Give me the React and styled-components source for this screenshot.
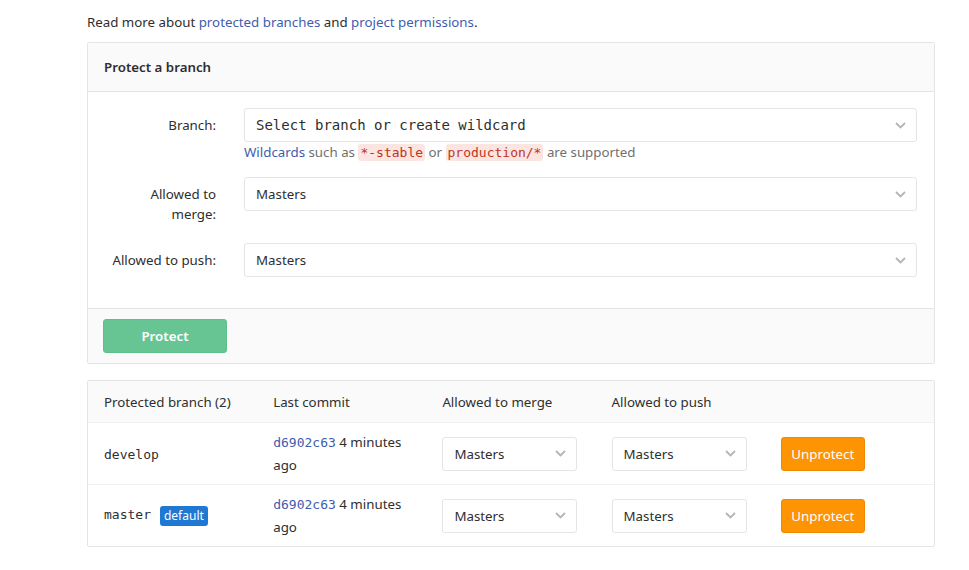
import React from "react";
import styled, { createGlobalStyle } from "styled-components";

const GlobalStyle = createGlobalStyle`
  body {
    margin: 0;
    background: #fff;
    font-family: "Noto Sans", "Open Sans", sans-serif;
    font-size: 13.3px;
    color: #2e2e2e;
  }
`;

const mono = `"DejaVu Sans Mono", "Liberation Mono", monospace`;

function Chevron() {
  return (
    <svg width="11" height="7" viewBox="0 0 11 7">
      <polyline
        points="1,1 5.5,5.5 10,1"
        fill="none"
        stroke="#b5b5b5"
        strokeWidth="1.8"
      />
    </svg>
  );
}

function Select({ children, code, small }) {
  return (
    <SelectBox small={small}>
      <SelectText code={code}>{children}</SelectText>
      <Chevron />
    </SelectBox>
  );
}

function BranchRow({ name, isDefault }) {
  return (
    <tr>
      <Td>
        <BranchName>{name}</BranchName>
        {isDefault && <Badge>default</Badge>}
      </Td>
      <Td>
        <Commit>
          <CommitLink>d6902c63</CommitLink> <span>4 minutes</span>{" "}
          <span>ago</span>
        </Commit>
      </Td>
      <Td>
        <Select small>Masters</Select>
      </Td>
      <Td>
        <Select small>Masters</Select>
      </Td>
      <Td>
        <UnprotectButton>Unprotect</UnprotectButton>
      </Td>
    </tr>
  );
}

export default function App() {
  return (
    <>
      <GlobalStyle />
      <Page>
        <Intro>
          Read more about <Link>protected branches</Link> and{" "}
          <Link>project permissions</Link>.
        </Intro>

        <Panel>
          <PanelHeader>Protect a branch</PanelHeader>
          <PanelBody>
            <FormRow gap={15}>
              <Label>Branch:</Label>
              <div>
                <Select code>Select branch or create wildcard</Select>
                <Help>
                  <Link>Wildcards</Link> such as <Code>*-stable</Code> or{" "}
                  <Code>production/*</Code> are supported
                </Help>
              </div>
            </FormRow>
            <FormRow gap={19}>
              <Label>
                Allowed to
                <br />
                merge:
              </Label>
              <Select>Masters</Select>
            </FormRow>
            <FormRow gap={31}>
              <Label>Allowed to push:</Label>
              <Select>Masters</Select>
            </FormRow>
          </PanelBody>
          <PanelFooter>
            <ProtectButton>Protect</ProtectButton>
          </PanelFooter>
        </Panel>

        <TablePanel>
          <Table>
            <thead>
              <tr>
                <Th>Protected branch (2)</Th>
                <Th>Last commit</Th>
                <Th>Allowed to merge</Th>
                <Th>Allowed to push</Th>
                <Th />
              </tr>
            </thead>
            <tbody>
              <BranchRow name="develop" />
              <BranchRow name="master" isDefault />
            </tbody>
          </Table>
        </TablePanel>
      </Page>
    </>
  );
}

const Page = styled.div`
  width: 848px;
  margin-left: 87px;
  padding-top: 12px;
`;

const Intro = styled.p`
  margin: 0 0 10px;
  line-height: 20px;
`;

const Link = styled.a`
  color: #3f5cae;
  text-decoration: none;
  cursor: pointer;
`;

const Panel = styled.div`
  border: 1px solid #e5e5e5;
  border-radius: 2px;
  background: #fff;
`;

const PanelHeader = styled.div`
  height: 48px;
  display: flex;
  align-items: center;
  padding: 0 16px;
  background: #fafafa;
  border-bottom: 1px solid #e5e5e5;
  font-weight: 600;
`;

const PanelBody = styled.div`
  padding: 16px 17px 0 16px;
`;

const FormRow = styled.div`
  display: grid;
  grid-template-columns: 112px 1fr;
  column-gap: 28px;
  margin-bottom: ${(p) => p.gap}px;
`;

const Label = styled.label`
  text-align: right;
  padding-top: 7px;
  line-height: 20px;
`;

const SelectBox = styled.div`
  height: 34px;
  box-sizing: border-box;
  width: ${(p) => (p.small ? "135px" : "100%")};
  display: flex;
  align-items: center;
  justify-content: space-between;
  padding: 0 10px 0 11px;
  border: 1px solid #e5e5e5;
  border-radius: 3px;
  background: #fff;
`;

const SelectText = styled.span`
  font-family: ${(p) => (p.code ? mono : "inherit")};
  font-size: ${(p) => (p.code ? "14px" : "13.3px")};
  color: #2e2e2e;
  white-space: nowrap;
`;

const Help = styled.div`
  margin-top: 1px;
  line-height: 18px;
  color: #707070;
`;

const Code = styled.code`
  font-family: ${mono};
  font-size: 13px;
  color: #c0341d;
  background: #fbe5e1;
  padding: 1px 2px;
  border-radius: 3px;
`;

const PanelFooter = styled.div`
  padding: 10px 15px;
  background: #fafafa;
  border-top: 1px solid #e5e5e5;
`;

const ProtectButton = styled.button`
  width: 124px;
  height: 34px;
  border: 1px solid #5fbf8c;
  border-radius: 3px;
  background: #67c594;
  color: #fff;
  font-family: inherit;
  font-size: 13.3px;
  font-weight: 600;
`;

const TablePanel = styled.div`
  margin-top: 16px;
  border: 1px solid #e5e5e5;
  border-radius: 2px;
`;

const Table = styled.table`
  width: 100%;
  table-layout: fixed;
  border-collapse: collapse;
`;

const Th = styled.th`
  height: 41px;
  padding: 0 16px;
  text-align: left;
  font-weight: 400;
  background: #fafafa;
  border-bottom: 1px solid #f0f0f0;
`;

const Td = styled.td`
  height: 61px;
  padding: 0 16px;
  vertical-align: middle;
  border-bottom: 1px solid #f0f0f0;
  tr:last-child & {
    border-bottom: none;
  }
`;

const BranchName = styled.span`
  font-family: ${mono};
  font-size: 13px;
`;

const Badge = styled.span`
  display: inline-block;
  margin-left: 9px;
  padding: 0 4px;
  height: 20px;
  line-height: 20px;
  border-radius: 3px;
  background: #1f78d1;
  color: #fff;
  font-size: 12px;
  vertical-align: middle;
`;

const Commit = styled.div`
  line-height: 22px;
`;

const CommitLink = styled(Link)`
  font-family: ${mono};
  font-size: 13px;
`;

const UnprotectButton = styled.button`
  width: 84px;
  height: 34px;
  border: 1px solid #ef8a00;
  border-radius: 3px;
  background: #fc9403;
  color: #fff;
  font-family: inherit;
  font-size: 13.3px;
`;
